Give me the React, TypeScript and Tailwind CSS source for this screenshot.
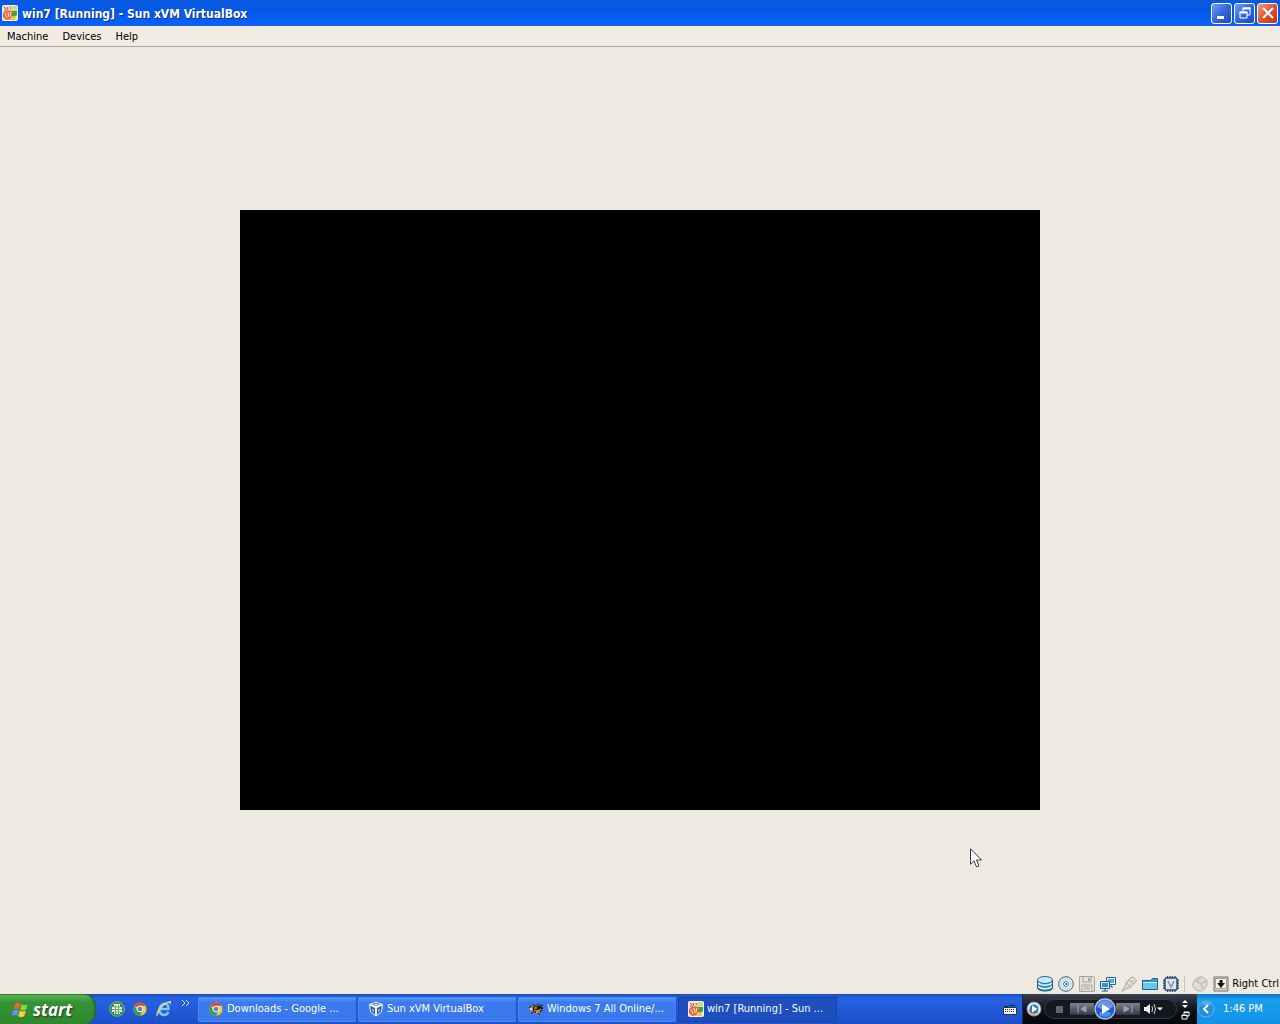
import type { ReactNode } from "react";

function Svg({ size = 16, box = 16, label, children }: { size?: number; box?: number; label?: string; children: ReactNode }) {
  return (
    <svg width={size} height={size} viewBox={`0 0 ${box} ${box}`} fill="none" className="shrink-0" role={label ? "img" : undefined} aria-label={label} aria-hidden={label ? undefined : true}>
      {children}
    </svg>
  );
}

function MachineIcon() {
  return (
    <Svg>
      <rect x=".5" y=".5" width="15" height="15" rx="1" fill="#efe3c4" stroke="#f5f2e8" />
      <path d="M1 1h9v5H1z" fill="#f3d5c6" />
      <path d="M10 1h5v9l-5-3z" fill="#c3dd92" />
      <path d="M10 6h5v4l-3 2-3-2z" fill="#3fa535" />
      <path d="M1 8c3-3 8-3 10-1l-1 7-6 1-3-3z" fill="#e8643c" />
      <path d="M9 11l5 1-1 3H8z" fill="#f3c13c" />
      <path d="M3 8l2 5M6 7l1 5M9 7l-1 4" stroke="#ffe9dc" />
      <path d="M2 2l2 2M5 2l1 3M8 2l1 2M2 5h3" stroke="#c05a48" />
    </Svg>
  );
}

function ChromeIcon() {
  return (
    <Svg size={14}>
      <circle cx="8" cy="8" r="7.500" fill="#f7c934" />
      <path d="M8 8 1.500 4.300A7.500 7.500 0 0 1 14.500 4.300H8z" fill="#e04535" />
      <path d="M1.500 4.300A7.500 7.500 0 0 0 8 15.500l3-5.700H5z" fill="#35a04d" />
      <circle cx="8" cy="8" r="3.700" fill="#f5f5f5" />
      <circle cx="8" cy="8" r="2.700" fill="#4a84e0" />
    </Svg>
  );
}

function CubeIcon() {
  return (
    <Svg>
      <path d="M8 1 14.500 3.500 13.500 11 8 15 2.500 11 1.500 3.500z" fill="#315c9b" stroke="#e9f6fb" strokeLinejoin="round" />
      <path d="M2 3.500 8 6.500l6-3M8 6.500V15" stroke="#e9f6fb" strokeWidth="2" />
      <path d="m5 3.500 3-1.300 3 1.300-3 1.300z" fill="#bfe3e6" />
      <path d="m4 7.500 2 1v3L4 10zM12 7.500l-2 1v3l2-1.500z" fill="#8ec3d8" />
    </Svg>
  );
}

function BeeIcon() {
  return (
    <Svg>
      <path d="M1 7c3-3 5-3 8-1l-2 5c-3 1-5-1-6-4z" fill="#b8743a" />
      <path d="M5 6c3-3 7-2 10 1l-2 4c-3 2-6 1-8-1z" fill="#18140f" />
      <path d="M6 9c2 1 5 1 7-1M8 11.500c2 0 3 0 4-1" stroke="#e9a21e" strokeWidth="1.300" />
      <path d="M6 6 4 3l4 1 3-2 2 3z" fill="#4b4a45" />
      <path d="M1 7 3 5M12 5l3-1M13 7h2M5 11l-2 2M10 12l2 2" stroke="#1c1711" />
      <circle cx="3" cy="8" r="1.200" fill="#f4d8c0" />
      <path d="M6 7h3" stroke="#e8e3d8" />
    </Svg>
  );
}

function WindowsFlag() {
  return (
    <Svg size={18} box={18}>
      <path d="M4 3c2-1.500 4-1.300 5.500-.3L8 8.200C6.500 7.300 4.500 7.200 2.500 8.300z" fill="#ed6335" />
      <path d="M10.500 3.200c1.800 1 4 1 6 0L15 8.700c-2 1-4 .9-6 0z" fill="#8bd33f" />
      <path d="M2.200 9.400c2-1.100 4-1 5.500-.1l-1.500 5.500C4.700 13.900 2.700 13.800.7 15z" fill="#5b93ef" />
      <path d="M8.700 9.800c2 .9 4 1 6 0l-1.500 5.500c-2 1-4 1-6 0z" fill="#fbd13f" />
    </Svg>
  );
}

function TitleBar() {
  const btn = "flex size-[21px] items-center justify-center rounded-[3px] border border-white";
  const blue = "bg-linear-to-br from-[#6f9df5] via-[#3566de] to-[#1c49c4]";
  return (
    <header className="flex h-[26px] items-center gap-1 bg-linear-to-b from-[#0a5ae0] via-[#0458e8] via-40% to-[#0a62fb] px-0.5">
      <MachineIcon />
      <h1 className="flex-1 truncate pt-px font-['DejaVu_Sans_Condensed','DejaVu_Sans',sans-serif] text-[12px] font-bold text-white [text-shadow:1px_1px_#0a318f]">win7 [Running] - Sun xVM VirtualBox</h1>
      <div className="flex gap-0.5">
        <button aria-label="Minimize" className={`${btn} ${blue}`}>
          <Svg><path d="M3 12.500h7" stroke="#fff" strokeWidth="3" /></Svg>
        </button>
        <button aria-label="Restore" className={`${btn} ${blue}`}>
          <Svg>
            <path d="M6 6V3h7v7h-3" stroke="#fff" /><path d="M5.500 3.500h8" stroke="#fff" strokeWidth="2" />
            <path d="M3 7h7v6H3z" stroke="#fff" /><path d="M2.500 7.500h8" stroke="#fff" strokeWidth="2" />
          </Svg>
        </button>
        <button aria-label="Close" className={`${btn} bg-linear-to-br from-[#f09a7c] via-[#e0512c] to-[#bd3413]`}>
          <Svg><path d="m3 3 10 10M13 3 3 13" stroke="#fff" strokeWidth="2.200" /></Svg>
        </button>
      </div>
    </header>
  );
}

function StatusBar() {
  return (
    <footer className="flex h-[21px] items-center justify-end gap-[5px]">
      <Svg label="Hard disks">
        <path d="M.5 4v8c0 4 15 4 15 0V4z" fill="#55b4e4" stroke="#25536f" />
        <ellipse cx="8" cy="4" rx="7.500" ry="3.500" fill="#c4ebfa" stroke="#34647f" />
        <path d="M1.500 7c1 3 12 3 13 0M1.500 10.500c1 3 12 3 13 0" stroke="#e0f7ff" strokeWidth="1.500" />
        <path d="M1.500 8.500c1 3 12 3 13 0M1.500 12c1 3 12 3 13 0" stroke="#286e9c" />
      </Svg>
      <Svg label="CD/DVD">
        <circle cx="8" cy="8" r="7.300" fill="#e1f0f7" stroke="#40627c" />
        <circle cx="8" cy="8" r="5" stroke="#b5d6e7" />
        <circle cx="8" cy="8" r="2.500" fill="#fff" stroke="#4b7897" /><circle cx="8" cy="8" r="1" fill="#24445b" />
      </Svg>
      <Svg label="Floppy disk">
        <path d="M.5.500h14l1 1v14H.5z" fill="#e6e3da" stroke="#a7a59f" />
        <path d="M4 1v5h8V1M3 15V9h10v6M5 11h6M5 13h6" stroke="#a7a59f" /><path d="M9 2h2v3H9z" fill="#a7a59f" />
      </Svg>
      <Svg label="Network">
        <path d="M6.500 1.500h9v7h-9z" fill="#e2f5ff" stroke="#2365a0" /><path d="M8 3h6v4H8z" fill="#4eb0e7" />
        <path d="M.5 5.500h9v7h-9z" fill="#d2efff" stroke="#1b568c" /><path d="M2 7h6v4H2z" fill="#328fce" />
        <path d="M5 13v2M2 15h6M11 9v2h2" stroke="#1b568c" />
      </Svg>
      <Svg label="USB">
        <path d="M10 1.500c2-1.500 6 2 5 4l-6 6-4 1-3.500 3-1-1L4 11l1-4z" fill="#e3e0d8" stroke="#a2a19a" />
        <path d="m8 4 5 4M5.500 7l4 4M11 4l1 1" stroke="#a2a19a" />
      </Svg>
      <Svg label="Shared folders">
        <path d="M.5 4.500h8l2-2h5v11H.5z" fill="#3499cf" stroke="#21658d" /><path d="M1 6h14v7H1z" fill="#65c8ed" /><path d="M1 6.500h14" stroke="#c9f3ff" />
      </Svg>
      <Svg label="Virtualization">
        <rect x="2" y="2" width="12" height="12" rx="1" fill="#dce6ef" stroke="#354b69" strokeWidth="1.500" />
        <path d="M4.500 0v2M7 0v2M9.500 0v2M12 0v2M4.500 14v2M7 14v2M9.500 14v2M12 14v2M0 4.500h2M0 7h2M0 9.500h2M0 12h2M14 4.500h2M14 7h2M14 9.500h2M14 12h2" stroke="#354b69" strokeWidth="1.300" />
        <path d="m5 5 3 6 3-6" stroke="#7e92ad" strokeWidth="1.500" />
      </Svg>
      <div className="h-4 w-px bg-[#c9c5b8]" />
      <span className="ml-0.5 flex"><Svg label="Mouse integration">
        <path d="M1 10C0 5 5 1 9 1c4 0 6 3 6 6 0 5-4 8-7 8s-6-2-7-5z" fill="#dedcd5" stroke="#b3b1aa" />
        <path d="M3 5c3 0 7 3 8 8M9 2C6 3 5 6 6 7M8 8l6-3" stroke="#b3b1aa" />
      </Svg></span>
      <Svg label="Host key">
        <path d="M1 1h14v14H1z" fill="#d8d6cd" stroke="#74726c" />
        <path d="M2.500 2.500h11v10h-11z" fill="#f3f2ec" stroke="#a3a199" /><path d="M6.500 4h3v3H12l-4 5-4-5h2.500z" fill="#161616" />
      </Svg>
      <span className="-ml-0.5 whitespace-nowrap pt-0.5 pr-px">Right Ctrl</span>
    </footer>
  );
}

function Task({ icon, label, active }: { icon: ReactNode; label: string; active?: boolean }) {
  return (
    <button aria-pressed={!!active} className={`flex h-[25px] w-[159px] min-w-0 items-center gap-[3px] rounded-[2px] border pl-[9px] text-white ${active ? "border-[#1743a3] bg-[#1d4fc0]" : "border-[#4a8af5] border-r-[#2257c4] bg-linear-to-b from-[#5292fa] via-[#3a7af0] via-20% to-[#3a78ec]"}`}>
      <span className="flex w-4 shrink-0 justify-center">{icon}</span>
      <span className="truncate pt-px">{label}</span>
    </button>
  );
}

function MediaPlayer() {
  return (
    <section aria-label="Media player" className="flex h-full w-[175px] shrink-0 items-center border-l border-[#0c2a6c] bg-linear-to-b from-[#3c4250] via-[#10131b] via-50% to-[#05070c] pl-[3px]">
      <button aria-label="Open player" className="flex">
        <Svg>
          <circle cx="8" cy="8" r="7" fill="#e6eef6" stroke="#8098ae" /><path d="M2 9c1 5 7 7 11 2L8 8z" fill="#ef9a39" />
          <circle cx="8" cy="8" r="4.500" fill="#2d79c6" /><path d="m6 4.500 5.500 3.500L6 11.500z" fill="#fff" />
        </Svg>
      </button>
      <div className="ml-0.5 flex h-5 w-[133px] items-center rounded-full border border-[#343943] bg-[#14171e]">
        <button aria-label="Stop" className="ml-1.5 flex"><Svg><path d="M5 5h7v7H5z" fill="#62666e" /></Svg></button>
        <button aria-label="Previous" className="ml-[3px] flex h-3 w-6 items-center justify-center bg-linear-to-b from-[#7d838e] to-[#343b48]">
          <Svg><path d="M4 4v8M12 5 7 8l5 3z" fill="#9ca0a7" stroke="#9ca0a7" /></Svg>
        </button>
        <button aria-label="Play" className="flex">
          <Svg size={22} box={22}>
            <circle cx="11" cy="11" r="10" fill="#2456c7" stroke="#a9bfea" strokeWidth="1.500" />
            <path d="M3 9C4 0 18 0 19 9c-4 3-12 3-16 0z" fill="#6b94e8" /><ellipse cx="11" cy="16" rx="6" ry="3" fill="#3f93ed" /><path d="m8 6 8 5-8 5z" fill="#fff" />
          </Svg>
        </button>
        <button aria-label="Next" className="flex h-3 w-6 items-center justify-center bg-linear-to-b from-[#7d838e] to-[#343b48]">
          <Svg><path d="M12 4v8M4 5l5 3-5 3z" fill="#9ca0a7" stroke="#9ca0a7" /></Svg>
        </button>
        <button aria-label="Volume" className="ml-[3px] flex">
          <Svg size={22} box={22}>
            <path d="M1 9h2l4-3v10l-4-3H1z" fill="#eceef0" /><path d="M9 8q1 3 0 6M11 6q3 5 0 10" stroke="#d6dbe0" /><path d="M14 9.500h6l-3 3z" fill="#fff" />
          </Svg>
        </button>
      </div>
      <div className="flex w-4 flex-col items-center gap-0.5">
        <button aria-label="Toggle visualization" className="flex"><Svg size={10} box={10}><path d="m2 4 3-3 3 3zM2 6l3 3 3-3z" fill="#fff" /></Svg></button>
        <button aria-label="Restore player" className="flex"><Svg size={9} box={9}><path d="M3 3V1h5v4H6M1 4h5v4H1zM1 4.500h5M3 1.500h5" stroke="#fff" /></Svg></button>
      </div>
    </section>
  );
}

function Taskbar() {
  return (
    <nav aria-label="Taskbar" className="flex h-[30px] items-center bg-linear-to-b from-[#1c4eb8] via-[#2662e4] via-15% to-[#1d4fc9]">
      <button className="flex h-full w-24 shrink-0 items-center gap-1 rounded-r-xl border-t border-r-2 border-t-[#2f7a2d] border-r-[#2a6c2c] bg-linear-to-b from-[#5cb459] via-[#379236] via-25% to-[#2f872f] pl-[11px] font-['Open_Sans','Noto_Sans',sans-serif] text-[17px] font-bold text-white italic [text-shadow:1px_1px_2px_#1c3f19]">
        <WindowsFlag />
        start
      </button>
      <div className="flex w-[102px] shrink-0 items-center pl-[13px]">
        <button aria-label="Quick launch grid" className="flex">
          <Svg><circle cx="8" cy="8" r="7.300" fill="#2f9149" stroke="#71bd83" /><path d="M5 3h6v10H5zM3 6h10v5H3z" fill="#eff8ea" /><path d="M5 6h6M3 8.500h10M5 11h6M6.500 4v9M9.500 4v9" stroke="#6ba77a" /></Svg>
        </button>
        <button aria-label="Google Chrome" className="ml-2 flex"><ChromeIcon /></button>
        <button aria-label="Internet Explorer" className="ml-2 flex">
          <Svg size={18} box={18}><path d="M13.500 12c-3 5-9 3-9-2s5-8 8-5c1 1 1 2 1 4H6" stroke="#76c9f8" strokeWidth="2.500" /><path d="M2 17C-1 13 7 2 15 1c2 0 1 3 0 4 1-5-7 0-10 5-2 4-3 6-3 7z" fill="#e9d57d" /></Svg>
        </button>
        <button aria-label="More quick launch items" className="mb-3 ml-2 flex"><Svg size={10} box={10}><path d="m1 2 3 3-3 3M5 2l3 3-3 3" stroke="#d5e3ff" /></Svg></button>
      </div>
      <div className="flex min-w-0 flex-1 gap-px">
        <Task icon={<ChromeIcon />} label="Downloads - Google ..." />
        <Task icon={<CubeIcon />} label="Sun xVM VirtualBox" />
        <Task icon={<BeeIcon />} label="Windows 7 All Online/..." />
        <Task icon={<MachineIcon />} label="win7 [Running] - Sun ..." active />
      </div>
      <button aria-label="Keyboard layout" className="mr-1 flex shrink-0">
        <Svg><path d="M2 5.500h4M7 4.500h6" stroke="#11203b" /><path d="M1.500 6.500h13v7h-13z" fill="#f4f2e7" stroke="#26344e" /><path d="M3 8.500h10M3 10.500h10" stroke="#26344e" strokeDasharray="1 1" /></Svg>
      </button>
      <MediaPlayer />
      <div className="flex h-full w-[83px] shrink-0 items-center bg-linear-to-b from-[#1473cd] via-[#18a0ee] via-20% to-[#1391e6] text-white">
        <button aria-label="Show hidden icons" className="flex">
          <Svg size={18} box={18}><circle cx="9" cy="9" r="8" fill="#278be1" stroke="#69b8ed" /><path d="M3 6c2-5 9-6 12-1-3 1-6-1-12 1z" fill="#57abe8" /><path d="M11 5 7 9l4 4" stroke="#fff" strokeWidth="2" /></Svg>
        </button>
        <time className="ml-2 whitespace-nowrap pt-px">1:46 PM</time>
      </div>
    </nav>
  );
}

export default function App() {
  return (
    <div className="relative flex min-h-screen flex-col overflow-hidden bg-[#eeeae0] font-['DejaVu_Sans_Condensed','DejaVu_Sans',sans-serif] text-[11px] text-black">
      <TitleBar />
      <nav aria-label="Menu" className="flex h-[21px] items-center border-b border-[#aca899] bg-[#f0ece1]">
        <button className="px-[7px] pt-0.5">Machine</button>
        <button className="px-[7px] pt-0.5">Devices</button>
        <button className="px-[7px] pt-0.5">Help</button>
      </nav>
      <main className="flex flex-1 items-center justify-center">
        <div role="img" aria-label="Guest display" className="aspect-4/3 w-[800px] max-w-full bg-black" />
      </main>
      <StatusBar />
      <Taskbar />
      <svg width="13" height="20" viewBox="0 0 13 20" className="pointer-events-none absolute top-[848px] left-[970px]" aria-hidden="true">
        <path d="M.5.800v15.500l3.500-3.500 2.500 6 2.500-1-2.500-5.800h5z" fill="#fff" stroke="#33363c" />
      </svg>
    </div>
  );
}
